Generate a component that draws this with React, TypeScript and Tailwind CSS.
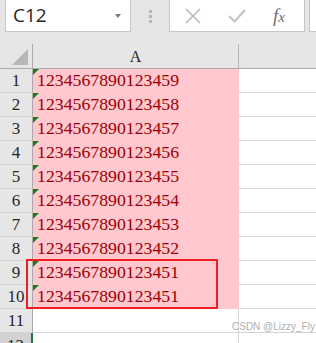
const values = [
  "1234567890123459",
  "1234567890123458",
  "1234567890123457",
  "1234567890123456",
  "1234567890123455",
  "1234567890123454",
  "1234567890123453",
  "1234567890123452",
  "1234567890123451",
  "1234567890123451",
];

const serif = { fontFamily: '"Liberation Serif", "Times New Roman", serif' };

function Toolbar() {
  return (
    <div className="flex h-[44px] items-start bg-[#e6e6e6]">
      <div className="ml-[5px] flex h-[32px] w-[126px] items-center justify-between border border-t-0 border-[#c6c6c6] bg-white pl-[7px] pr-[9px]">
        <span className="text-[19px] leading-none text-[#262626]" style={{ fontFamily: '"Open Sans", "Noto Sans", sans-serif' }}>
          C12
        </span>
        <span className="h-0 w-0 border-x-[3.5px] border-t-[4px] border-x-transparent border-t-[#7a7a7a]" />
      </div>
      <div className="flex h-[32px] w-[38px] flex-col items-center justify-center gap-[2px]">
        <span className="h-[3px] w-[3px] bg-[#b5b5b5]" />
        <span className="h-[3px] w-[3px] bg-[#b5b5b5]" />
        <span className="h-[3px] w-[3px] bg-[#b5b5b5]" />
      </div>
      <div className="flex h-[32px] w-[136px] items-center border border-t-0 border-[#c6c6c6] bg-white">
        <svg width="18" height="18" viewBox="0 0 18 18" className="ml-[14px]">
          <path d="M2 2 L16 16 M16 2 L2 16" stroke="#b8b8b8" strokeWidth="1.6" />
        </svg>
        <svg width="20" height="18" viewBox="0 0 20 18" className="ml-[25px]">
          <path d="M2 9 L7.5 14.5 L18 3" stroke="#c4c4c4" strokeWidth="2.2" fill="none" />
        </svg>
        <span className="ml-[26px] text-[19px] italic leading-none text-[#6e6e6e]" style={serif}>
          f<span className="text-[15px]">x</span>
        </span>
      </div>
      <div className="ml-[4px] h-[32px] flex-1 border border-t-0 border-r-0 border-[#c6c6c6] bg-white" />
    </div>
  );
}

function ColumnHeader() {
  return (
    <div className="flex h-[25px] border-b border-[#ababab] bg-[#e6e6e6]">
      <div className="relative w-[33px] border-r border-[#ababab]">
        <div
          className="absolute bottom-[3px] right-[4px] h-[16px] w-[16px] bg-[#b8b8b8]"
          style={{ clipPath: "polygon(100% 0, 100% 100%, 0 100%)" }}
        />
      </div>
      <div
        className="flex w-[206px] items-end justify-center border-r border-[#b8b8b8] pb-[3px] text-[16px] leading-none text-[#262626]"
        style={serif}
      >
        A
      </div>
      <div className="flex-1" />
    </div>
  );
}

function Row({ n, value }: { n: number; value?: string }) {
  return (
    <div className="flex h-[24px]">
      <div
        className="flex w-[33px] items-end justify-center border-b border-r border-b-[#d4d4d4] border-r-[#ababab] bg-[#e6e6e6] pb-[3px] text-[17px] leading-none text-[#262626]"
        style={serif}
      >
        {n}
      </div>
      {value ? (
        <div className="relative flex w-[206px] items-end bg-[#ffc7ce] pb-[3px] pl-[4px]">
          <span
            className="absolute left-0 top-0 h-[6px] w-[6px] bg-[#1d7a1d]"
            style={{ clipPath: "polygon(0 0, 100% 0, 0 100%)" }}
          />
          <span className="text-[17.75px] font-medium leading-none text-[#9c0006]" style={serif}>
            {value}
          </span>
        </div>
      ) : (
        <div className="w-[206px] border-b border-r border-[#d4d4d4]" />
      )}
      <div className="flex-1 border-b border-[#d4d4d4]" />
    </div>
  );
}

export default function App() {
  return (
    <div className="relative h-[343px] w-[316px] overflow-hidden bg-white">
      <Toolbar />
      <ColumnHeader />
      {values.map((v, i) => (
        <Row key={i} n={i + 1} value={v} />
      ))}
      <Row n={11} />
      <div className="flex h-[24px]">
        <div
          className="flex w-[33px] items-end justify-center border-r-2 border-[#217346] bg-[#d2d2d2] pb-[3px] text-[17px] leading-none text-[#262626]"
          style={serif}
        >
          12
        </div>
        <div className="w-[206px] border-r border-[#d4d4d4]" />
      </div>
      <div className="absolute left-[26px] top-[259px] h-[50px] w-[192px] border-2 border-[#ee1c25]" />
      <div
        className="absolute left-[232px] top-[322px] text-[10px] leading-none text-[#b0b0b0]"
        style={{ fontFamily: '"Liberation Sans", Arial, sans-serif' }}
      >
        CSDN @Lizzy_Fly
      </div>
    </div>
  );
}
